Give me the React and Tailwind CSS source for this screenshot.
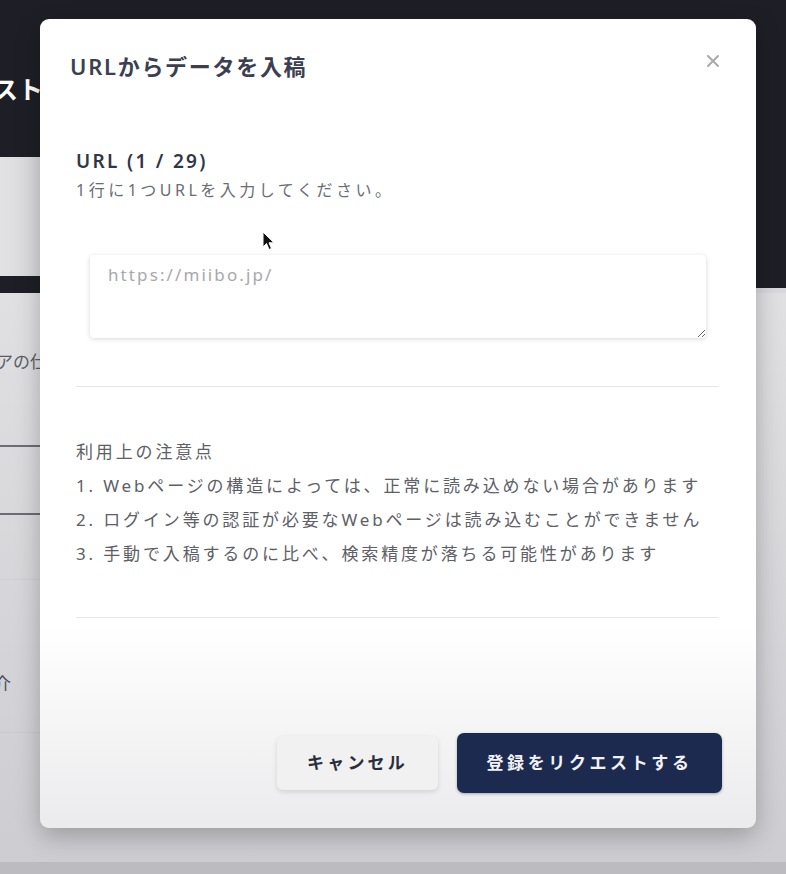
import React from "react";

export default function App() {
  const jp = { fontFamily: '"Noto Sans", "Noto Sans CJK JP", sans-serif' };
  return (
    <div className="relative w-[786px] h-[874px] overflow-hidden flex flex-col bg-[#d8d8dc]" style={jp}>
      {/* background page */}
      <div className="h-[157px] bg-[#1e1f26] pt-[71px]">
        <div className="-ml-[7px] text-[25px] font-bold text-white leading-[36px] tracking-[0px]">スト</div>
      </div>
      <div className="h-[136px] flex">
        <div className="w-[60px] flex flex-col">
          <div className="h-[119px] bg-gradient-to-r from-[#e2e2e5] to-[#d4d4d8]"></div>
          <div className="flex-1 bg-[#1e1f26]"></div>
        </div>
        <div className="flex-1 flex flex-col">
          <div className="h-[131px] bg-[#1e1f26]"></div>
          <div className="flex-1 bg-[#d9d9dd]"></div>
        </div>
      </div>
      <div className="flex-1 flex flex-col bg-gradient-to-b from-[#e0e0e3] to-[#cdcdd1]">
        <div className="pt-[56px] -ml-[4px] text-[17px] text-[#5b5d66] leading-[26px]">アの仕</div>
        <div className="mt-[70px] h-[2px] w-[60px] bg-[#6b6d76]"></div>
        <div className="mt-[66px] h-[2px] w-[60px] bg-[#6b6d76]"></div>
        <div className="mt-[64px] h-px w-[60px] bg-[#d0d0d4]"></div>
        <div className="mt-[92px] -ml-[6px] text-[17px] text-[#4b4d56] leading-[24px]">介</div>
        <div className="mt-[36px] h-px w-[60px] bg-[#cacace]"></div>
        <div className="flex-1"></div>
        <div className="h-[12px] bg-[#bcbcc0]"></div>
      </div>

      {/* modal */}
      <div className="absolute left-[40px] top-[19px] w-[716px] h-[809px] rounded-[9px] bg-gradient-to-b from-white from-[75%] to-[#ebebed] shadow-[0_8px_24px_rgba(0,0,0,0.25)] flex flex-col">
        <div className="relative pt-[33px] pl-[30px]">
          <h2 className="text-[22px] leading-[29px] font-semibold text-[#3b4050] tracking-[1.7px]">URLからデータを入稿</h2>
          <button className="absolute right-[36px] top-[35px] text-[#a9a9ad]">
            <svg width="14" height="14" viewBox="0 0 14 14" fill="none" stroke="currentColor" strokeWidth="2" strokeLinecap="round">
              <path d="M2 2 L12 12 M12 2 L2 12" />
            </svg>
          </button>
        </div>
        <div className="pl-[36px] pr-[38px] flex flex-col">
          <div className="mt-[67px] text-[19px] leading-[26px] font-semibold text-[#313647] tracking-[2.3px]">URL (1 / 29)</div>
          <div className="mt-[5px] text-[16px] leading-[22px] text-[#6b6d73] tracking-[3.5px]">1行に1つURLを入力してください。</div>
          <textarea
            className="mt-[54px] ml-[14px] w-[616px] h-[83px] rounded-[4px] bg-white px-[18px] py-[8px] text-[17px] leading-[24px] tracking-[2.1px] text-[#444] placeholder:text-[#a8a8ab] shadow-[0_1px_5px_rgba(0,0,0,0.16)] outline-none"
            style={jp}
            placeholder="https://miibo.jp/"
          ></textarea>
          <div className="mt-[48px] h-px bg-[#e6e6e8]"></div>
          <div className="mt-[48px] text-[17px] leading-[34px] text-[#5e6066] tracking-[2.85px] whitespace-nowrap">
            <div>利用上の注意点</div>
            <div>1. Webページの構造によっては、正常に読み込めない場合があります</div>
            <div>2. ログイン等の認証が必要なWebページは読み込むことができません</div>
            <div>3. 手動で入稿するのに比べ、検索精度が落ちる可能性があります</div>
          </div>
          <div className="mt-[46px] h-px bg-[#e6e6e8]"></div>
        </div>
        <div className="flex-1"></div>
        <div className="flex items-center justify-end gap-[19px] pr-[34px] pb-[35px]">
          <button className="w-[161px] h-[54px] rounded-[6px] bg-[#f1f1f2] shadow-[0_2px_5px_rgba(0,0,0,0.12)] text-[17px] font-bold text-[#2a2e3b] tracking-[3.2px]">キャンセル</button>
          <button className="w-[265px] h-[60px] rounded-[7px] bg-[#1b2a4e] shadow-[0_1px_3px_rgba(0,0,0,0.3)] text-[17px] font-bold text-[#f2f2f4] tracking-[3.6px]">登録をリクエストする</button>
        </div>
      </div>

      {/* mouse cursor */}
      <svg className="absolute left-[262px] top-[231px]" width="14" height="21" viewBox="0 0 14 21">
        <path d="M1 1 L1 16 L4.5 12.5 L7 18.5 L9.5 17.5 L7 11.8 L12 11.8 Z" fill="#111" stroke="#fff" strokeWidth="1" strokeLinejoin="round" />
      </svg>
    </div>
  );
}
